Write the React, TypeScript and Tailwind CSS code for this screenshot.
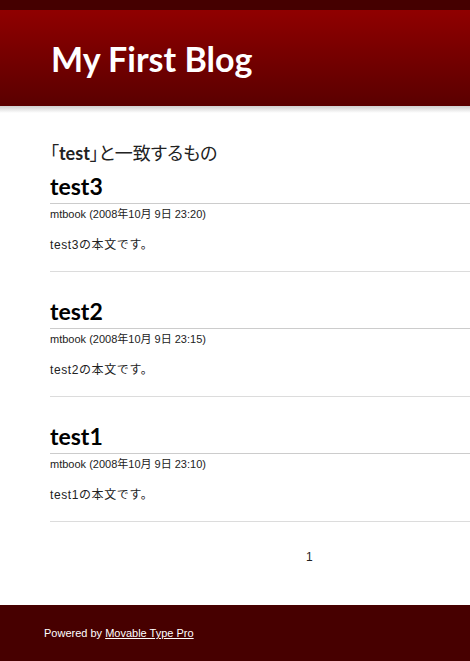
const entries = [
  { title: "test3", time: "23:20" },
  { title: "test2", time: "23:15" },
  { title: "test1", time: "23:10" },
];

const sans = "font-['Liberation_Sans','Noto_Sans_CJK_JP',sans-serif]";
const head = "font-['Lato','Noto_Sans_CJK_JP',sans-serif]";

export default function App() {
  return (
    <div className={`min-h-[661px] flex flex-col bg-white ${sans}`}>
      <div className="h-[10px] bg-[#450000]" />
      <div className="h-[96px] bg-gradient-to-b from-[#900000] to-[#5a0000] pl-[51px] pt-[29px]">
        <h1 className={`${head} text-[34px] leading-[40px] font-bold text-white`}>
          My First Blog
        </h1>
      </div>
      <div className="h-[7px] bg-gradient-to-b from-[#cfcfcf] to-white" />

      <main className="flex-1 pl-[50px] pt-[27px]">
        <h2 className={`${head} text-[18px] leading-[26px] text-[#222] [font-feature-settings:'palt']`}>
          「<span className="font-bold">test</span>」と一致するもの
        </h2>

        {entries.map((e, i) => (
          <div key={e.title} className={`border-b border-[#dcdcdc] pb-[17px] ${i > 0 ? "mt-[24px]" : "mt-[5px]"}`}>
            <h3 className={`${head} text-[23px] leading-[30px] font-bold text-black border-b border-[#cccccc] pb-[2px]`}>
              {e.title}
            </h3>
            <p className="text-[11px] leading-[16px] text-[#222] mt-[2px]">
              mtbook (2008年10月 9日 {e.time})
            </p>
            <p className="text-[12px] leading-[18px] text-[#222] mt-[14px] tracking-[0.6px]">
              {e.title}の本文です。
            </p>
          </div>
        ))}

        <div className="text-[12px] text-[#222] pt-[26px] pl-[256px]">1</div>
      </main>

      <footer className="h-[56px] bg-[#470000] pl-[44px] pt-[20px]">
        <p className="text-[11px] text-white leading-[16px]">
          Powered by <a href="#" className="underline">Movable Type Pro</a>
        </p>
      </footer>
    </div>
  );
}
